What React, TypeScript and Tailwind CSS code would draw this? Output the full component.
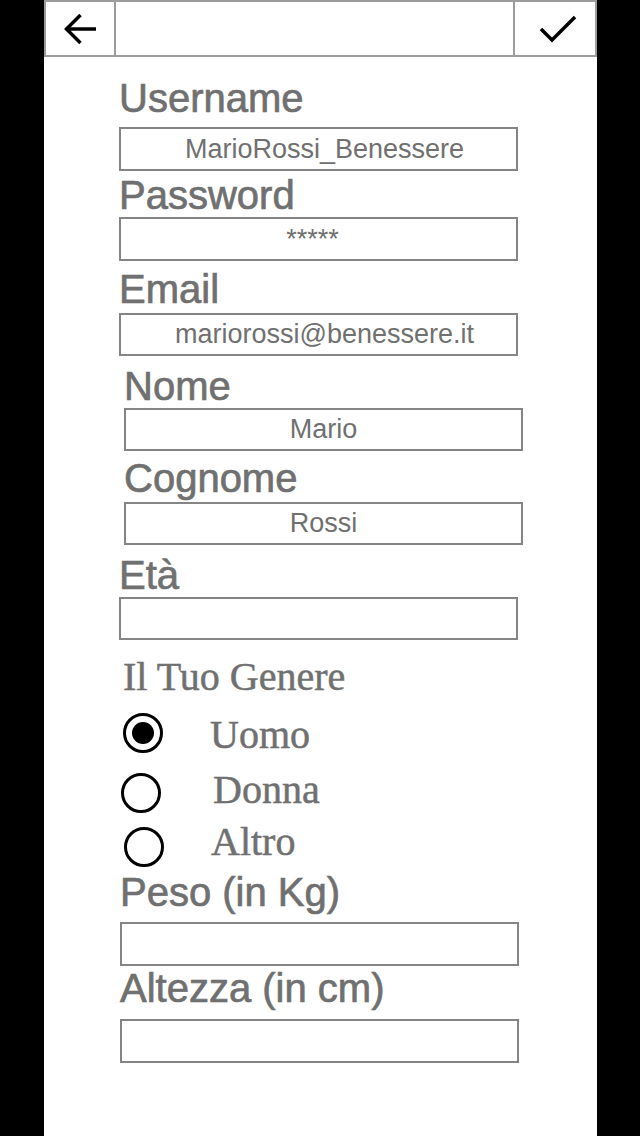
import React from "react";

type FieldProps = {
  label: string;
  value?: string;
  ml: string;
  labelMt: string;
  inputMt: string;
  inputH: string;
  textPad?: string;
};

const Field: React.FC<FieldProps> = ({label, value, ml, labelMt, inputMt, inputH, textPad = ""}) => (
  <div className={ml}>
    <div className={`${labelMt} text-[40px] leading-[40px] text-[#707070] whitespace-nowrap [-webkit-text-stroke:0.7px_#707070]`}>{label}</div>
    <div
      className={`${inputMt} ${inputH} w-[399px] border-2 border-[#858585] flex items-center justify-center ${textPad} text-[27px] text-[#707070]`}
    >
      {value}
    </div>
  </div>
);

const Radio = ({checked}: {checked?: boolean}) => (
  <div className="w-10 h-10 shrink-0 rounded-full border-[3.5px] border-black flex items-center justify-center">
    {checked && <div className="w-[22px] h-[22px] rounded-full bg-black"/>}
  </div>
);

const sans = {fontFamily: '"Liberation Sans", Arial, sans-serif'};

export default function App() {
  return (
    <div className="min-h-[1136px] w-[640px] bg-black" style={sans}>
      <div className="ml-[44px] w-[553px] min-h-[1136px] bg-white">
        {/* top bar */}
        <div className="h-[57px] flex border-2 border-[#9c9c9c]">
          <div className="w-[70px] border-r-2 border-[#9c9c9c] flex items-center justify-center">
            <svg width="34" height="34" viewBox="0 0 34 34" fill="none" stroke="black" strokeWidth="3.5">
              <path d="M33 17 H3.5"/>
              <path d="M17.5 3 L3.5 17 L17.5 31"/>
            </svg>
          </div>
          <div className="flex-1"/>
          <div className="w-[82px] border-l-2 border-[#9c9c9c] flex items-center justify-center pl-[6px]">
            <svg width="38" height="30" viewBox="0 0 38 30" fill="none" stroke="black" strokeWidth="3.5">
              <path d="M2 15 L13 26 L36 3"/>
            </svg>
          </div>
        </div>

        <Field label="Username" value="MarioRossi_Benessere" ml="ml-[75px]" labelMt="mt-[21px]" inputMt="mt-[9px]" inputH="h-[44px]" textPad="pl-[12px]"/>
        <Field label="Password" value="*****" ml="ml-[75px]" labelMt="mt-[4px]" inputMt="mt-[2px]" inputH="h-[44px]" textPad="pr-[12px]"/>
        <Field label="Email" value="mariorossi@benessere.it" ml="ml-[75px]" labelMt="mt-[8px]" inputMt="mt-[4px]" inputH="h-[43px]" textPad="pl-[12px]"/>
        <Field label="Nome" value="Mario" ml="ml-[80px]" labelMt="mt-[10px]" inputMt="mt-[2px]" inputH="h-[43px]"/>
        <Field label="Cognome" value="Rossi" ml="ml-[80px]" labelMt="mt-[7px]" inputMt="mt-[4px]" inputH="h-[43px]"/>
        <Field label="Età" ml="ml-[75px]" labelMt="mt-[10px]" inputMt="mt-[2px]" inputH="h-[43px]"/>

        {/* gender */}
        <div style={{fontFamily: '"Liberation Serif", "Times New Roman", serif'}} className="text-[#707070] text-[40px] leading-[40px] [-webkit-text-stroke:0.5px_#707070]">
          <div className="mt-[17px] ml-[79px]">Il Tuo Genere</div>
          <div className="mt-[16px] flex items-start ml-[79px]">
            <Radio checked/>
            <span className="mt-[2px] ml-[47px]">Uomo</span>
          </div>
          <div className="mt-[15px] flex items-start ml-[77px]">
            <div className="mt-[3px]"><Radio/></div>
            <span className="ml-[52px]">Donna</span>
          </div>
          <div className="mt-[9px] flex items-start ml-[80px]">
            <div className="mt-[5px]"><Radio/></div>
            <span className="ml-[47px]">Altro</span>
          </div>
        </div>

        <Field label="Peso (in Kg)" ml="ml-[76px]" labelMt="mt-[5px]" inputMt="mt-[10px]" inputH="h-[44px]"/>
        <Field label="Altezza (in cm)" ml="ml-[76px]" labelMt="mt-[2px]" inputMt="mt-[11px]" inputH="h-[44px]"/>
      </div>
    </div>
  );
}
